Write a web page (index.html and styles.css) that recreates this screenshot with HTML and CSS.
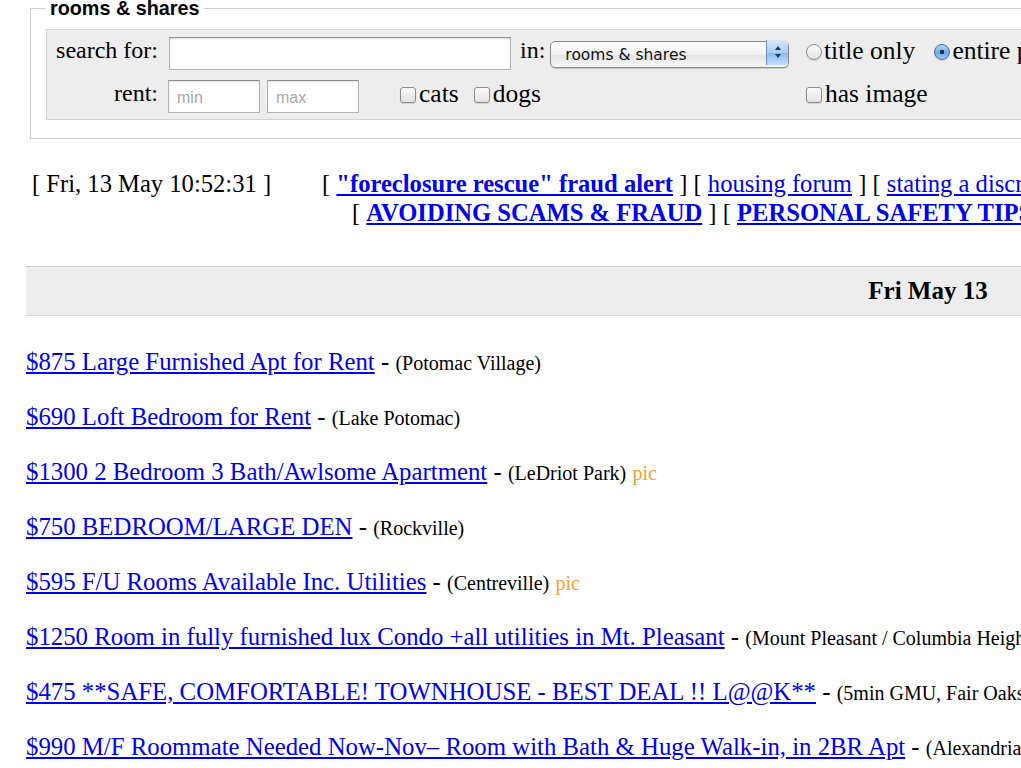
FILE: index.html
```html
<!DOCTYPE html>
<html lang="en">
<head>
  <meta charset="UTF-8" />
  <meta name="viewport" content="width=device-width, initial-scale=1.0"/>
  <title>rooms &amp; shares</title>
  <link rel="stylesheet" href="styles.css">
</head>
<body>

<div class="page">
  <form class="search" id="searchForm">
    <fieldset class="box">
      <legend>rooms &amp; shares</legend>
      <div class="fields">
        <label class="lbl" for="query">search for:</label>
        <div class="cell">
          <input type="text" id="query" class="text query">
          <span class="in">in:</span>
          <span class="pick">
            <select id="cat">
              <option>rooms &amp; shares</option>
              <option>all housing</option>
              <option>apts / housing</option>
              <option>sublets / temporary</option>
            </select>
            <span class="stepper">
              <svg width="8" height="14" viewBox="0 0 8 14"><path d="M4 1 L7 5 H1 Z M4 13 L7 9 H1 Z" fill="#1c3a63"/></svg>
            </span>
          </span>
        </div>
        <div class="cell opts">
          <label class="opt"><input type="radio" name="scope" class="radio"> title only</label>
          <label class="opt"><input type="radio" name="scope" class="radio" checked> entire post</label>
        </div>

        <label class="lbl" for="min">rent:</label>
        <div class="cell">
          <input type="text" id="min" class="text price" placeholder="min">
          <input type="text" id="max" class="text price" placeholder="max">
          <label class="opt pets"><input type="checkbox" class="check"> cats</label>
          <label class="opt"><input type="checkbox" class="check"> dogs</label>
        </div>
        <div class="cell opts">
          <label class="opt"><input type="checkbox" class="check"> has image</label>
        </div>
      </div>
    </fieldset>
  </form>

  <div class="meta">
    <div class="stamp">[ Fri, 13 May 10:52:31 ]</div>
    <div class="notices">
      <div>[ <a href="#"><b>"foreclosure rescue" fraud alert</b></a> ] [ <a href="#">housing forum</a> ] [ <a href="#">stating a discrimination preference</a> ] [ <a href="#">fair housing</a> ]</div>
      <div class="second">[ <a href="#"><b>AVOIDING SCAMS &amp; FRAUD</b></a> ] [ <a href="#"><b>PERSONAL SAFETY TIPS</b></a> ]</div>
    </div>
  </div>

  <h4 class="day">Fri May 13</h4>

  <div class="listings">
    <p class="row"><a href="#">$875 Large Furnished Apt for Rent</a> - <span class="where">(Potomac Village)</span></p>
    <p class="row"><a href="#">$690 Loft Bedroom for Rent</a> - <span class="where">(Lake Potomac)</span></p>
    <p class="row"><a href="#">$1300 2 Bedroom 3 Bath/Awlsome Apartment</a> - <span class="where">(LeDriot Park)</span> <span class="pic">pic</span></p>
    <p class="row"><a href="#">$750 BEDROOM/LARGE DEN</a> - <span class="where">(Rockville)</span></p>
    <p class="row"><a href="#">$595 F/U Rooms Available Inc. Utilities</a> - <span class="where">(Centreville)</span> <span class="pic">pic</span></p>
    <p class="row"><a href="#">$1250 Room in fully furnished lux Condo +all utilities in Mt. Pleasant</a> - <span class="where">(Mount Pleasant / Columbia Heights)</span></p>
    <p class="row"><a href="#">$475 **SAFE, COMFORTABLE! TOWNHOUSE - BEST DEAL !! L@@K**</a> - <span class="where">(5min GMU, Fair Oaks)</span></p>
    <p class="row"><a href="#">$990 M/F Roommate Needed Now-Nov– Room with Bath &amp; Huge Walk-in, in 2BR Apt</a> - <span class="where">(Alexandria)</span></p>
  </div>
</div>

</body>
</html>
```

FILE: styles.css
```css
html, body {
  overflow: hidden;
}
body {
  margin: 0;
  width: 1840px;
  font-family: "Liberation Serif", "Times New Roman", serif;
  font-size: 24px;
  color: #000;
  background: #fff;
}
a {
  color: #0000ee;
}
.page {
  padding-left: 26px;
}

/* search box */
.box {
  margin: -3px 10px 0 4px;
  padding: 9px 15px 18px 15px;
  border: 1px solid #cfcfcf;
}
.box legend {
  padding: 0 4px;
  font-family: "Liberation Sans", Arial, sans-serif;
  font-weight: bold;
  font-size: 19.8px;
}
.fields {
  display: grid;
  grid-template-columns: 102px 626px 1fr;
  grid-template-rows: 33px 33px;
  column-gap: 11px;
  row-gap: 10px;
  padding: 7px 9px 6px 9px;
  background: #ededed;
  border: 1px solid #d2d2d2;
}
.lbl {
  text-align: right;
  align-self: center;
  line-height: 28px;
  padding-bottom: 7px;
}
.cell {
  display: flex;
  align-items: center;
  white-space: nowrap;
}
.text {
  box-sizing: border-box;
  height: 33px;
  margin: 0;
  padding: 2px 8px 0 8px;
  border: 1px solid #b4b4b4;
  border-top-color: #8e8e8e;
  box-shadow: inset 0 1px 2px rgba(0,0,0,0.12);
  background: #fff;
  font-family: "Liberation Sans", Arial, sans-serif;
  font-size: 16px;
}
.text::placeholder {
  color: #a8a8a8;
}
.query {
  width: 342px;
}
.price {
  width: 92px;
  margin-right: 8px;
  margin-left: -1px;
}
.in {
  margin: 0 5px 7px 9px;
}
.pick {
  position: relative;
  display: inline-block;
  height: 27px;
  margin-bottom: 3px;
}
.pick select {
  appearance: none;
  -webkit-appearance: none;
  width: 239px;
  height: 27px;
  margin: 0;
  padding: 0 28px 0 14px;
  border: 1px solid #8a8a8a;
  border-radius: 5px;
  background: linear-gradient(#ffffff, #f1f1f1 50%, #e4e4e4 51%, #f6f6f6);
  box-shadow: 0 1px 1px rgba(0,0,0,0.15);
  font-family: "Lucida Grande", "DejaVu Sans", sans-serif;
  font-size: 15.5px;
  color: #111;
}
.stepper {
  position: absolute;
  top: 1px;
  right: 1px;
  width: 21px;
  height: 25px;
  display: flex;
  align-items: center;
  justify-content: center;
  border-left: 1px solid #6f8fb5;
  border-radius: 0 4px 4px 0;
  background: linear-gradient(#d6e8fb, #a9cdf3 50%, #86b8ee 51%, #c4e0fb);
  pointer-events: none;
}
.opts {
  gap: 19px;
}
.opt {
  display: inline-flex;
  align-items: center;
  font-size: 25.5px;
  line-height: 28px;
  padding-bottom: 6px;
}
.pets {
  margin-left: 33px;
  margin-right: 15px;
}
.radio, .check {
  appearance: none;
  -webkit-appearance: none;
  flex: none;
  box-sizing: border-box;
  width: 16px;
  height: 16px;
  margin: 3px 2px 0 0;
  border: 1px solid #8c8c8c;
  background: linear-gradient(#fafafa, #e2e2e2);
  box-shadow: 0 1px 1px rgba(0,0,0,0.12);
}
.radio {
  border-radius: 50%;
}
.check {
  border-radius: 3px;
  margin-right: 3px;
}
.radio:checked {
  border-color: #4a6f9c;
  background: radial-gradient(circle, #1b2c44 0 2px, transparent 2.5px), linear-gradient(#b9d8f6, #6aa6e6 55%, #9fcaf5);
}

/* date + notices */
.meta {
  display: flex;
  margin-top: 30px;
  padding-left: 6px;
  font-size: 24.6px;
  line-height: 29px;
  white-space: nowrap;
}
.stamp {
  width: 290px;
}
.second {
  padding-left: 30px;
}

/* day header */
.day {
  margin: 39px 10px 0 0;
  height: 48px;
  line-height: 48px;
  text-align: center;
  font-size: 25px;
  background: #ededed;
  border-top: 1px solid #cfcfcf;
  border-bottom: 1px solid #d6d6d6;
}

/* listings */
.listings {
  padding-top: 5px;
}
.row {
  margin: 27px 0;
  font-size: 24.8px;
  line-height: 28px;
  white-space: nowrap;
}
.where, .pic {
  font-size: 20px;
  line-height: 20px;
}
.pic {
  color: #f5a030;
}
```
